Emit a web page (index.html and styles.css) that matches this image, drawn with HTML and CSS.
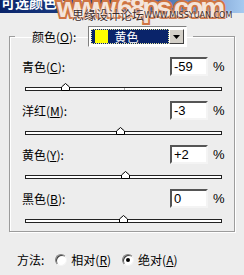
FILE: index.html
```html
<!DOCTYPE html>
<html lang="zh-CN">
  <head>
    <meta charset="UTF-8" />
    <meta name="viewport" content="width=device-width, initial-scale=1.0" />
    <title>可选颜色选项</title>
    <link rel="stylesheet" href="styles.css">
  </head>
  <body>
    <div class="dialog">
      <div class="titlebar"><span class="title">可选颜色选项</span></div>

      <div class="mark">
        <span class="mark-big">www.68ps.com</span>
        <span class="mark-cn">思缘设计论坛</span>
        <span class="mark-en">WWW.MISSYUAN.COM</span>
      </div>

      <fieldset class="group">
        <legend class="group-head">
          <span class="label">颜色(<u>O</u>):</span>
          <div class="select">
            <div class="select-value"><span class="swatch"></span>黄色</div>
            <div class="select-btn">
              <svg width="7" height="4" viewBox="0 0 7 4"><path d="M0 0h7L3.5 4z" fill="#000" /></svg>
            </div>
          </div>
        </legend>

        <div class="row">
          <div class="row-top">
            <span class="label">青色(<u>C</u>):</span>
            <span class="field">-59</span>
            <span class="pct">%</span>
          </div>
          <div class="slider">
            <div class="track"><i class="tick"></i></div>
            <svg class="thumb" style="left: calc(20.5% - 4.5px)" width="9" height="8" viewBox="0 0 9 8"><path d="M0.5 7.5V4L4.5 0.5L8.5 4V7.5Z" fill="#fff" stroke="#000" /></svg>
          </div>
        </div>

        <div class="row">
          <div class="row-top">
            <span class="label">洋红(<u>M</u>):</span>
            <span class="field">-3</span>
            <span class="pct">%</span>
          </div>
          <div class="slider">
            <div class="track"><i class="tick"></i></div>
            <svg class="thumb" style="left: calc(48.5% - 4.5px)" width="9" height="8" viewBox="0 0 9 8"><path d="M0.5 7.5V4L4.5 0.5L8.5 4V7.5Z" fill="#fff" stroke="#000" /></svg>
          </div>
        </div>

        <div class="row">
          <div class="row-top">
            <span class="label">黄色(<u>Y</u>):</span>
            <span class="field">+2</span>
            <span class="pct">%</span>
          </div>
          <div class="slider">
            <div class="track"><i class="tick"></i></div>
            <svg class="thumb" style="left: calc(51% - 4.5px)" width="9" height="8" viewBox="0 0 9 8"><path d="M0.5 7.5V4L4.5 0.5L8.5 4V7.5Z" fill="#fff" stroke="#000" /></svg>
          </div>
        </div>

        <div class="row">
          <div class="row-top">
            <span class="label">黑色(<u>B</u>):</span>
            <span class="field">0</span>
            <span class="pct">%</span>
          </div>
          <div class="slider">
            <div class="track"><i class="tick"></i></div>
            <svg class="thumb" style="left: calc(50% - 4.5px)" width="9" height="8" viewBox="0 0 9 8"><path d="M0.5 7.5V4L4.5 0.5L8.5 4V7.5Z" fill="#fff" stroke="#000" /></svg>
          </div>
        </div>
      </fieldset>

      <div class="method">
        <span class="label">方法:</span>
        <span class="radio"></span>
        <span class="label">相对(<u>R</u>)</span>
        <span class="radio checked"></span>
        <span class="label">绝对(<u>A</u>)</span>
      </div>
    </div>
  </body>
</html>
```

FILE: styles.css
```css
* {
  padding: 0;
  margin: 0;
  box-sizing: border-box;
}

body {
  background-color: #ededed;
  font-family: "Noto Sans CJK SC", "Liberation Sans", sans-serif;
  font-size: 12px;
  color: #000;
}

.dialog {
  position: relative;
  width: 244px;
  height: 275px;
  overflow: hidden;
}

.titlebar {
  height: 13px;
  overflow: hidden;
  background: linear-gradient(to right, #0a246a 0%, #2a5298 55%, #a6caf0 100%);
}

.title {
  display: block;
  margin-top: -7px;
  padding-left: 1px;
  line-height: 18px;
  font-size: 14px;
  font-weight: bold;
  color: #fff;
}

/* watermark lying over the title bar */
.mark {
  position: absolute;
  left: 0;
  top: 0;
  width: 244px;
  height: 24px;
  pointer-events: none;
}

.mark-big {
  position: absolute;
  left: 57px;
  top: -8px;
  font-family: "Liberation Sans", sans-serif;
  font-weight: bold;
  font-size: 28px;
  letter-spacing: -3px;
  color: #f4e4da;
  -webkit-text-stroke: 4px #cf7443;
  paint-order: stroke fill;
}

.mark-cn {
  position: absolute;
  left: 72px;
  top: 8px;
  font-size: 12px;
  line-height: 14px;
  color: #3a2a2a;
  text-shadow: 0 0 2px #fff, 0 0 2px #fff;
}

.mark-en {
  position: absolute;
  left: 144px;
  top: 11px;
  font-family: "DejaVu Sans", sans-serif;
  font-size: 8px;
  line-height: 10px;
  color: #3a2a2a;
  text-shadow: 0 0 2px #fff;
}

.group {
  width: 226px;
  margin: 13px 0 0 9px;
  padding: 14px 10px 8px 12px;
  border: 1px solid #9c9c9c;
  box-shadow: inset 1px 1px 0 #fff, 1px 1px 0 #fff;
}

.group-head {
  display: flex;
  align-items: center;
  margin: 0 0 -4px -7px;
  padding: 0 6px 0 17px;
}

.label {
  line-height: 14px;
  white-space: nowrap;
}

.select {
  display: flex;
  width: 99px;
  height: 21px;
  margin-left: 12px;
  padding: 2px;
  background-color: #fff;
  border: 1px solid;
  border-color: #808080 #fff #fff #808080;
}

.select-value {
  display: flex;
  align-items: center;
  flex: 1;
  gap: 6px;
  padding-left: 4px;
  background-color: #0a246a;
  outline: 1px dotted #e8e8a0;
  outline-offset: -1px;
  color: #fff;
  line-height: 14px;
}

.swatch {
  width: 13px;
  height: 13px;
  background-color: #ffff00;
}

.select-btn {
  display: flex;
  align-items: center;
  justify-content: center;
  width: 15px;
  background-color: #d4d0c8;
  border: 1px solid;
  border-color: #fff #404040 #404040 #fff;
}

.row {
  margin-bottom: 10px;
}

.row:last-child {
  margin-bottom: 0;
}

.row-top {
  display: flex;
  align-items: center;
  height: 19px;
}

.row-top .label {
  flex: 1;
}

.field {
  width: 38px;
  height: 19px;
  padding: 1px 0 0 2px;
  background-color: #fff;
  border: 2px solid;
  border-color: #555 #f4f4f4 #f4f4f4 #555;
  font-family: "Liberation Sans", sans-serif;
  font-size: 13px;
  line-height: 14px;
}

.pct {
  width: 11px;
  margin-left: 5px;
  font-family: "Liberation Sans", sans-serif;
  font-size: 13px;
}

.slider {
  position: relative;
  width: 197px;
  height: 8px;
  margin: 7px 0 0 3px;
}

.track {
  position: absolute;
  left: 0;
  right: 0;
  bottom: 0;
  height: 4px;
  background-color: #fff;
  border: 1px solid #222;
}

.tick {
  position: absolute;
  left: 98px;
  top: 0;
  width: 1px;
  height: 2px;
  background-color: #aaa;
}

.thumb {
  position: absolute;
  top: 0;
}

.method {
  display: flex;
  align-items: center;
  margin-top: 21px;
  padding-left: 17px;
}

.radio {
  position: relative;
  width: 12px;
  height: 12px;
  margin: 0 4px 0 11px;
  border-radius: 50%;
  background-color: #fff;
  border: 1px solid;
  border-color: #808080 #f4f4f4 #f4f4f4 #808080;
  box-shadow: inset 1px 1px 0 #404040;
}

.radio.checked::after {
  content: "";
  position: absolute;
  left: 3px;
  top: 3px;
  width: 4px;
  height: 4px;
  border-radius: 50%;
  background-color: #000;
}
```
